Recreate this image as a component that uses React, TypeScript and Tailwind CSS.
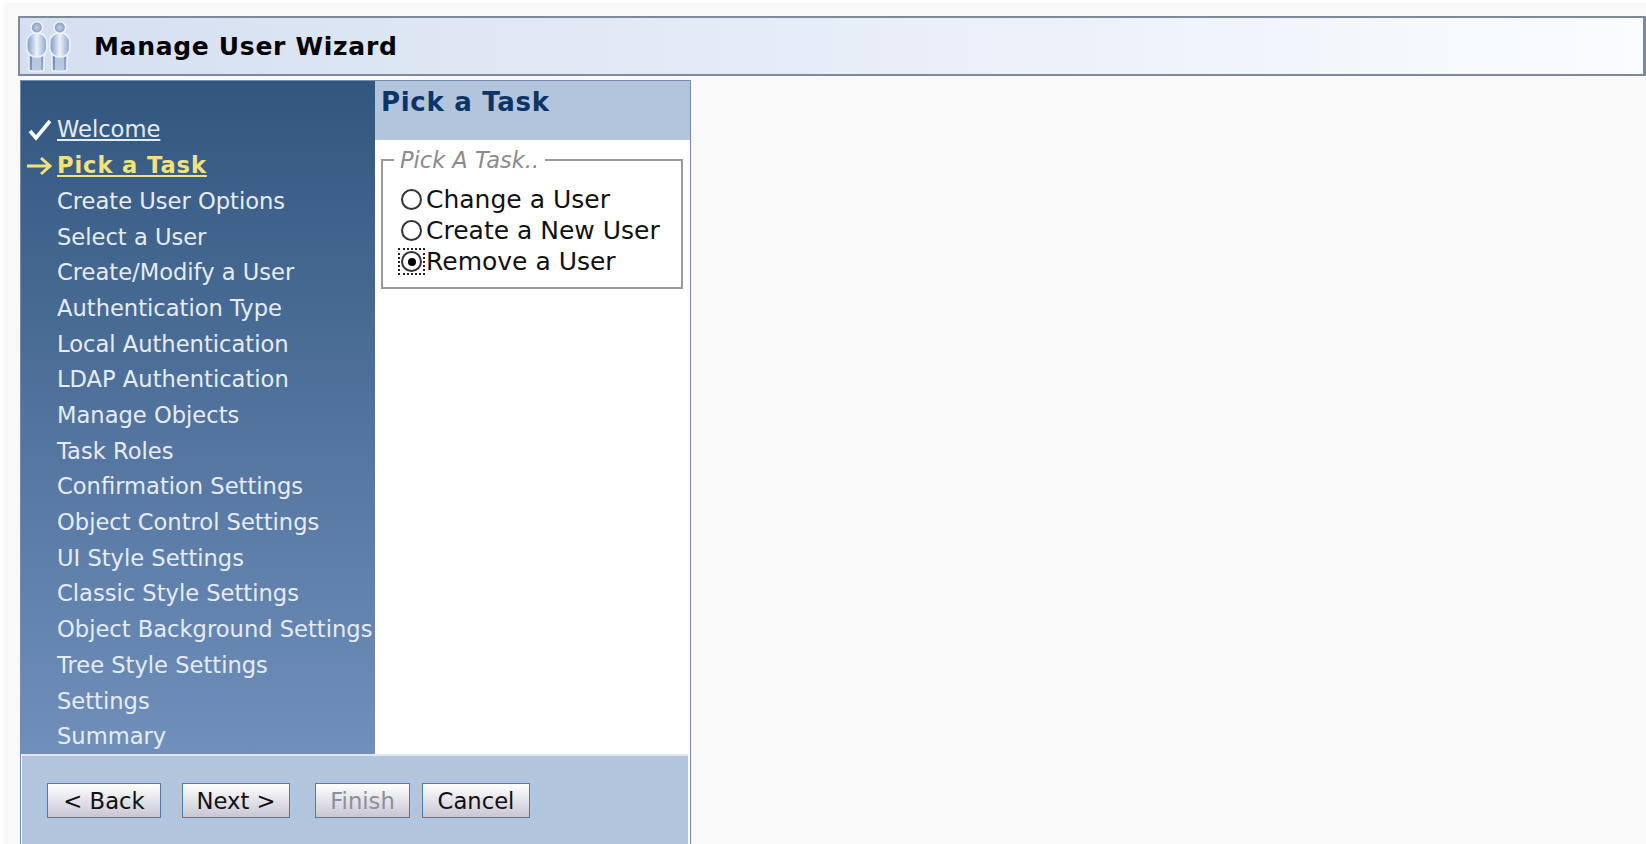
const steps = [
  "Create User Options",
  "Select a User",
  "Create/Modify a User",
  "Authentication Type",
  "Local Authentication",
  "LDAP Authentication",
  "Manage Objects",
  "Task Roles",
  "Confirmation Settings",
  "Object Control Settings",
  "UI Style Settings",
  "Classic Style Settings",
  "Object Background Settings",
  "Tree Style Settings",
  "Settings",
  "Summary",
];

function UserFigure({ x }: { x: number }) {
  return (
    <g transform={`translate(${x} 0)`}>
      <rect x="3" y="31" width="15" height="20" rx="2" fill="url(#legs)" stroke="#eef2fa" strokeWidth="1.5" />
      <rect x="6" y="37" width="9" height="13" fill="#b9c8e2" />
      <rect x="0.8" y="13" width="20" height="24" rx="9" fill="url(#torso)" stroke="#eef2fa" strokeWidth="1.5" />
      <circle cx="10.8" cy="7.5" r="5.8" fill="url(#head)" stroke="#eef2fa" strokeWidth="1.5" />
    </g>
  );
}

function UsersIcon() {
  return (
    <svg width="46" height="52" viewBox="0 0 46 52" className="shrink-0">
      <defs>
        <radialGradient id="head">
          <stop offset="0" stopColor="#c3d0e6" />
          <stop offset="1" stopColor="#7f97c0" />
        </radialGradient>
        <linearGradient id="torso" x1="0" x2="1" y1="0" y2="0">
          <stop offset="0" stopColor="#7d98c4" />
          <stop offset="0.5" stopColor="#eef2f9" />
          <stop offset="1" stopColor="#8aa3cb" />
        </linearGradient>
        <linearGradient id="legs" x1="0" x2="1" y1="0" y2="1">
          <stop offset="0" stopColor="#5f7fb4" />
          <stop offset="1" stopColor="#9db2d6" />
        </linearGradient>
      </defs>
      <UserFigure x={1} />
      <UserFigure x={24} />
    </svg>
  );
}

function Radio({ label, checked }: { label: string; checked?: boolean }) {
  return (
    <div className="flex h-[31px] items-center">
      <span
        className={`flex h-[27px] w-[27px] items-center justify-center ${
          checked ? "border-2 border-dotted border-[#222]" : ""
        }`}
      >
        <span className="flex h-[21px] w-[21px] items-center justify-center rounded-full border-2 border-[#333]">
          {checked && <span className="h-[8px] w-[8px] rounded-full bg-black" />}
        </span>
      </span>
      <span className="ml-px text-[25px] leading-none text-[#111]">{label}</span>
    </div>
  );
}

function WizardButton({ label, disabled, width }: { label: string; disabled?: boolean; width: string }) {
  return (
    <button
      className={`${width} h-[35px] border border-[#4f7dae] bg-gradient-to-b from-white to-[#c9c6d4] text-[22.7px] ${
        disabled ? "text-[#8d8f98]" : "text-[#111]"
      }`}
    >
      {label}
    </button>
  );
}

export default function App() {
  return (
    <div className="h-screen overflow-hidden bg-white pl-[4px] pt-[3px] font-['DejaVu_Sans',sans-serif]">
      <div className="h-full bg-[#f9f9f9] pl-[14px] pt-[13px]">
        <header className="flex h-[60px] items-center border-2 border-r-[3px] border-[#7d8a99] bg-gradient-to-r from-[#d5dff0] to-[#fafcff] pl-[5px]">
          <UsersIcon />
          <h1 className="ml-[23px] mt-[2px] text-[25px] font-bold tracking-[0.7px] text-black">Manage User Wizard</h1>
        </header>

        <div className="ml-[2px] mt-[4px] flex h-[770px] w-[671px] flex-col border border-[#6f8db5] bg-white">
          <div className="flex h-[673px]">
            <nav className="h-full w-[354px] shrink-0 bg-gradient-to-b from-[#32577f] to-[#7090bb] pl-[5px] pt-[31px] text-[22.6px] text-[#e6ecf5]">
              <div className="flex h-[36px] items-center">
                <span className="flex w-[31px] justify-start pl-[2px] text-white">
                  <svg width="24" height="22" viewBox="0 0 24 22" fill="none" stroke="currentColor" strokeWidth="3.6">
                    <path d="M2 12 L8 19 L22 2" />
                  </svg>
                </span>
                <span className="underline underline-offset-2">Welcome</span>
              </div>
              <div className="flex h-[36px] items-center font-bold tracking-[0.9px] text-[#f3e27c]">
                <span className="flex w-[31px] justify-start">
                  <svg width="26" height="20" viewBox="0 0 26 20" fill="none" stroke="currentColor" strokeWidth="3">
                    <path d="M1 10 H23 M15 2 L24 10 L15 18" />
                  </svg>
                </span>
                <span className="underline underline-offset-2">Pick a Task</span>
              </div>
              {steps.map((step) => (
                <div key={step} className="flex h-[35.7px] items-center whitespace-nowrap pl-[31px]">
                  {step}
                </div>
              ))}
            </nav>

            <main className="flex-1">
              <div className="h-[59px] bg-[#b3c4dd] pl-[6px] pt-[2px] text-[26px] font-bold tracking-[0.7px] text-[#0b3566]">
                Pick a Task
              </div>
              <fieldset className="ml-[6px] mr-[7px] mt-[11px] h-[138px] border-2 border-[#999] pb-0 pl-[15px]">
                <legend className="ml-[-4px] px-[6px] text-[22.5px] italic leading-[18px] text-[#8b8b8b]">
                  Pick A Task..
                </legend>
                <div className="mt-[15px]">
                  <Radio label="Change a User" />
                  <Radio label="Create a New User" />
                  <Radio label="Remove a User" checked />
                </div>
              </fieldset>
            </main>
          </div>

          <footer className="ml-[1px] mr-[2px] flex flex-1 items-start gap-[21px] border-t-2 border-[#dfe6f0] bg-[#b3c4dd] pl-[25px] pt-[27px]">
            <WizardButton label="< Back" width="w-[114px]" />
            <WizardButton label="Next >" width="w-[108px]" />
            <div className="ml-[4px] flex gap-[12px]">
              <WizardButton label="Finish" disabled width="w-[95px]" />
              <WizardButton label="Cancel" width="w-[108px]" />
            </div>
          </footer>
        </div>
      </div>
    </div>
  );
}
